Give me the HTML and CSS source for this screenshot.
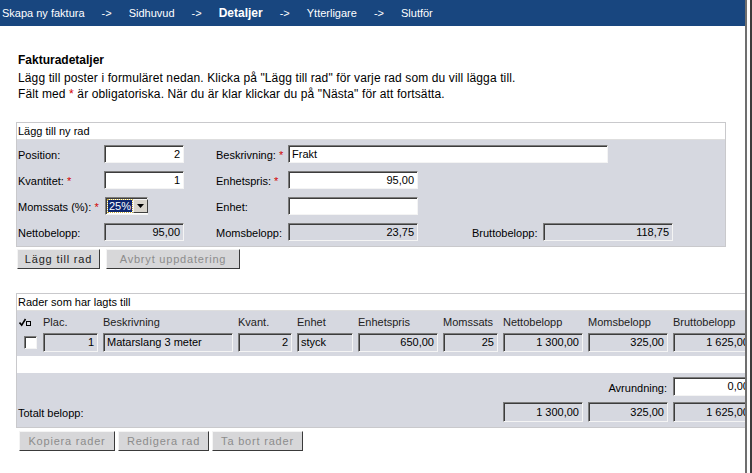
FILE: index.html
```html
<!DOCTYPE html>
<html lang="sv">
<head>
<meta charset="utf-8">
<title>Skapa ny faktura - Detaljer</title>
<link rel="stylesheet" href="styles.css">
</head>
<body>
<div class="window">
  <div class="frame">
    <nav class="steps">
      <span class="step">Skapa ny faktura</span>
      <span class="arrow">-&gt;</span>
      <span class="step">Sidhuvud</span>
      <span class="arrow">-&gt;</span>
      <span class="step current">Detaljer</span>
      <span class="arrow">-&gt;</span>
      <span class="step">Ytterligare</span>
      <span class="arrow">-&gt;</span>
      <span class="step">Slutför</span>
    </nav>
    <main class="content">
      <h1 class="title">Fakturadetaljer</h1>
      <p class="intro">Lägg till poster i formuläret nedan. Klicka på "Lägg till rad" för varje rad som du vill lägga till.<br>Fält med <span class="req">*</span> är obligatoriska. När du är klar klickar du på "Nästa" för att fortsätta.</p>

      <section class="panel form-panel">
        <div class="panel-title">Lägg till ny rad</div>
        <div class="form-grid">
          <span class="lbl">Position:</span>
          <span class="field num w80">2</span>
          <span></span>
          <span class="lbl">Beskrivning: <span class="req">*</span></span>
          <span class="field w320 span-rest">Frakt</span>

          <span class="lbl">Kvantitet: <span class="req">*</span></span>
          <span class="field num w80">1</span>
          <span></span>
          <span class="lbl">Enhetspris: <span class="req">*</span></span>
          <span class="field num w130">95,00</span>
          <span class="span-tail"></span>

          <span class="lbl">Momssats (%): <span class="req">*</span></span>
          <span class="select"><span class="sel-val"><span class="sel-hl">25%</span></span><span class="sel-btn"><svg width="7" height="4" viewBox="0 0 7 4"><path d="M0 0h7L3.5 4z" fill="#000"/></svg></span></span>
          <span></span>
          <span class="lbl">Enhet:</span>
          <span class="field w130"></span>
          <span class="span-tail"></span>

          <span class="lbl">Nettobelopp:</span>
          <span class="field ro num w80">95,00</span>
          <span></span>
          <span class="lbl">Momsbelopp:</span>
          <span class="field ro num w130">23,75</span>
          <span></span>
          <span class="lbl">Bruttobelopp:</span>
          <span class="field ro num w130">118,75</span>
        </div>
      </section>
      <div class="btn-row top-btns">
        <span class="btn btn-add">Lägg till rad</span>
        <span class="btn disabled btn-cancel">Avbryt uppdatering</span>
      </div>

      <section class="panel rows-panel">
        <div class="panel-title">Rader som har lagts till</div>
        <div class="rows-body">
          <div class="tgrid thead">
            <span class="chk-icon"><svg width="13" height="9" viewBox="0 0 13 9"><path d="M0.5 4.5l2.2 2.6L6.5 1" fill="none" stroke="#000" stroke-width="1.6"/><rect x="7.5" y="3.5" width="4" height="4" fill="none" stroke="#000" stroke-width="1"/></svg></span>
            <span>Plac.</span>
            <span>Beskrivning</span>
            <span>Kvant.</span>
            <span>Enhet</span>
            <span>Enhetspris</span>
            <span>Momssats</span>
            <span>Nettobelopp</span>
            <span>Momsbelopp</span>
            <span>Bruttobelopp</span>
          </div>
          <div class="tgrid trow">
            <span class="cbox-cell"><span class="cbox"></span></span>
            <span class="field ro num">1</span>
            <span class="field ro">Matarslang 3 meter</span>
            <span class="field ro num">2</span>
            <span class="field ro">styck</span>
            <span class="field ro num">650,00</span>
            <span class="field ro num">25</span>
            <span class="field ro num">1 300,00</span>
            <span class="field ro num">325,00</span>
            <span class="field ro num">1 625,00</span>
          </div>
        </div>
        <div class="blank-row"></div>
        <div class="rows-foot">
          <div class="tgrid frow">
            <span class="lbl round-lbl">Avrundning:</span>
            <span class="field num">0,00</span>
          </div>
          <div class="tgrid frow totals">
            <span class="lbl total-lbl">Totalt belopp:</span>
            <span class="field ro num">1 300,00</span>
            <span class="field ro num">325,00</span>
            <span class="field ro num">1 625,00</span>
          </div>
        </div>
      </section>
      <div class="btn-row bottom-btns">
        <span class="btn disabled b-copy">Kopiera rader</span>
        <span class="btn disabled b-edit">Redigera rad</span>
        <span class="btn disabled b-del">Ta bort rader</span>
      </div>
    </main>
  </div>
  <div class="edge"></div>
</div>
</body>
</html>
```

FILE: styles.css
```css
* { box-sizing: border-box; }
html, body { margin: 0; padding: 0; background: #fff; }
body {
  font-family: "Liberation Sans", Arial, sans-serif;
  font-size: 11px;
  color: #000;
}
.window {
  display: flex;
  width: 752px;
  height: 473px;
  overflow: hidden;
}
.frame {
  width: 745px;
  flex: none;
  overflow: hidden;
}
.edge {
  width: 7px;
  flex: none;
  border-left: 2px solid #6e6e6e;
  border-right: 2px solid #3c3c3c;
  background: #fcfcfc;
}

/* step bar */
.steps {
  height: 26px;
  background: #18467f;
  color: #fff;
  display: flex;
  align-items: center;
  gap: 17px;
  padding-left: 2px;
  font-size: 11px;
  white-space: nowrap;
}
.steps .current { font-weight: bold; font-size: 12px; }
.steps .arrow { font-size: 11px; }

.content { padding: 26px 0 0 0; }
.title {
  margin: 0 0 2px 18px;
  font-size: 12px;
  line-height: 16px;
  font-weight: bold;
}
.intro {
  margin: 0 0 20px 18px;
  font-size: 12px;
  line-height: 16px;
  letter-spacing: 0.12px;
}
.req { color: #d20000; }

/* panels */
.panel {
  margin-left: 16px;
  border: 1px solid #c9c9cc;
  background: #d6d8e0;
}
.form-panel { width: 710px; }
.rows-panel { width: 745px; }
.panel-title {
  height: 17px;
  line-height: 17px;
  background: #fff;
  padding-left: 1px;
  border-bottom: 1px solid #dedede;
  white-space: nowrap;
}

.form-grid {
  display: grid;
  grid-template-columns: 86px 80px 32px 72px 130px 54px 71px 130px;
  grid-auto-rows: 18px;
  row-gap: 8px;
  align-items: center;
  padding: 5px 0 5px 1px;
  white-space: nowrap;
}
.span-rest { grid-column: 5 / 9; }
.span-tail { grid-column: 6 / 9; }

.lbl { line-height: 14px; padding-top: 2px; }

.field {
  display: block;
  height: 18px;
  line-height: 16px;
  padding: 0 3px;
  background: #fff;
  border: 1px solid;
  border-color: #7c7c7c #f4f4f4 #f4f4f4 #7c7c7c;
  box-shadow: inset 1px 1px 0 #3c3c3c;
  white-space: nowrap;
  overflow: hidden;
}
.field.ro { background: #d6d8e0; }
.field.num { text-align: right; }
.w80 { width: 80px; }
.w130 { width: 130px; }
.w320 { width: 320px; }

.select {
  display: flex;
  width: 43px;
  height: 18px;
  margin-left: 1px;
  border: 1px solid;
  border-color: #7c7c7c #f4f4f4 #f4f4f4 #7c7c7c;
  box-shadow: inset 1px 1px 0 #3c3c3c;
  background: #fff;
  padding: 1px;
}
.sel-val {
  flex: 1;
  padding: 1px;
  outline: 1px dotted #c8b040;
  outline-offset: -1px;
  display: flex;
}
.sel-hl {
  display: block;
  background: #0d2670;
  color: #fff;
  line-height: 12px;
  padding: 0 1px;
  flex: 1;
}
.sel-btn {
  width: 15px;
  flex: none;
  background: #d8d4cc;
  border: 1px solid;
  border-color: #f4f4f4 #404040 #404040 #f4f4f4;
  display: flex;
  align-items: center;
  justify-content: center;
}

/* buttons */
.btn-row { display: flex; }
.top-btns { margin: 2px 0 0 17px; gap: 6px; }
.bottom-btns { margin: 3px 0 0 19px; gap: 3px; }
.btn {
  display: flex;
  align-items: center;
  justify-content: center;
  height: 20px;
  background: #d7d7d9;
  border: 1px solid;
  border-color: #f4f4f4 #3a3a3a #3a3a3a #f4f4f4;
  font-size: 11px;
  letter-spacing: 0.8px;
  color: #222;
  white-space: nowrap;
}
.btn.disabled { color: #8c8c8c; }
.btn-add { width: 83px; }
.btn-cancel { width: 134px; }
.b-copy { width: 96px; }
.b-edit { width: 91px; }
.b-del { width: 91px; }

/* rows table */
.rows-panel { margin-top: 24px; }
.tgrid {
  display: grid;
  grid-template-columns: 21px 55px 130px 54px 56px 80px 55px 80px 80px 80px;
  column-gap: 5px;
  align-items: center;
  white-space: nowrap;
}
.thead { height: 20px; color: #222; padding-top: 1px; }
.chk-icon { display: flex; padding-left: 2px; padding-top: 1px; }
.trow { height: 19px; margin-top: 2px; }
.trow .field { height: 19px; line-height: 17px; }
.rows-body { padding-bottom: 4px; }
.cbox-cell { display: flex; padding-left: 7px; }
.cbox {
  width: 13px;
  height: 13px;
  background: #fff;
  border: 1px solid;
  border-color: #7c7c7c #f4f4f4 #f4f4f4 #7c7c7c;
  box-shadow: inset 1px 1px 0 #3c3c3c;
}
.blank-row {
  height: 17px;
  background: #fff;
}
.rows-foot {
  padding: 4px 0 5px 0;
  display: flex;
  flex-direction: column;
  gap: 6px;
}
.frow { height: 19px; }
.frow .field { height: 19px; line-height: 17px; }
.totals { height: 20px; }
.totals .field { height: 20px; line-height: 18px; }
.round-lbl { grid-column: 1 / 10; justify-self: end; margin-right: 1px; }
.total-lbl { grid-column: 1 / 8; padding-left: 1px; }
```
